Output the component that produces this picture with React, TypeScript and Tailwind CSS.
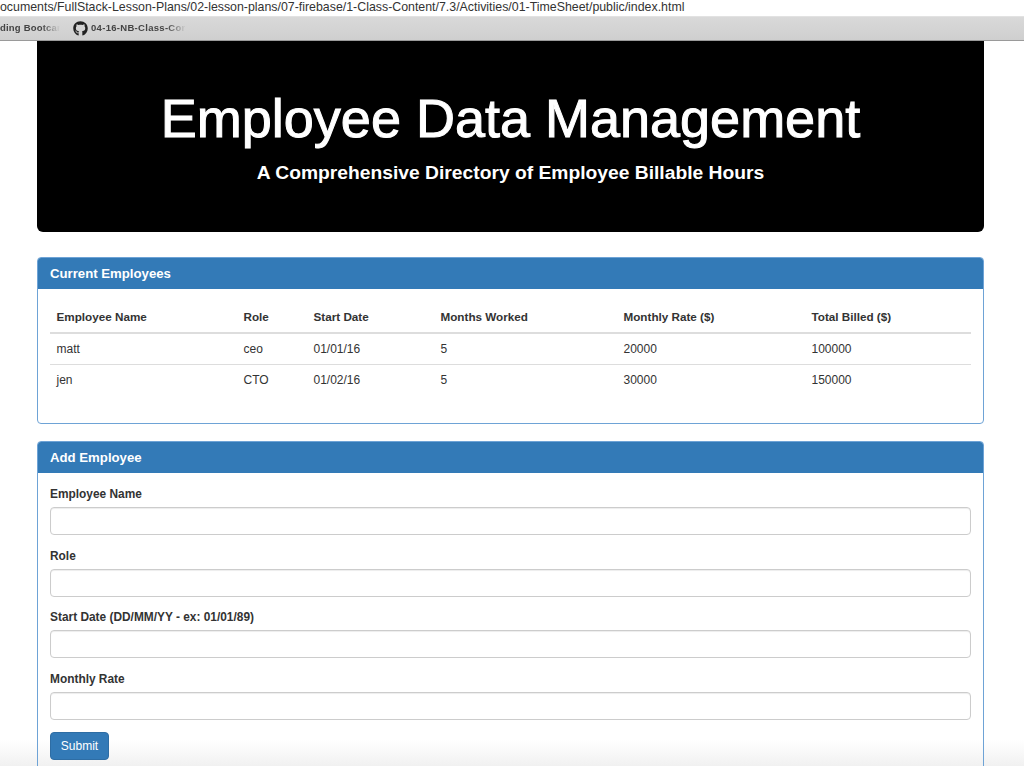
import React from "react";
import { FaGithub } from "react-icons/fa";

const cols = ["w-[187px]", "w-[70px]", "w-[127px]", "w-[183px]", "w-[188px]", "w-[159px]"];
const headers = ["Employee Name", "Role", "Start Date", "Months Worked", "Monthly Rate ($)", "Total Billed ($)"];
const rows = [
  ["matt", "ceo", "01/01/16", "5", "20000", "100000"],
  ["jen", "CTO", "01/02/16", "5", "30000", "150000"],
];
const fields = ["Employee Name", "Role", "Start Date (DD/MM/YY - ex: 01/01/89)", "Monthly Rate"];

function Row({ cells, className }: { cells: string[]; className: string }) {
  return (
    <div className={`flex ${className}`}>
      {cells.map((c, i) => (
        <div key={i} className={`${cols[i]} px-[6.5px]`}>{c}</div>
      ))}
    </div>
  );
}

function Panel({ title, children, className }: { title: string; children: React.ReactNode; className?: string }) {
  return (
    <section className={`rounded-[4px] border border-[#6ea3d6] ${className ?? ""}`}>
      <h2 className="flex h-[31px] items-center rounded-t-[3px] bg-[#337ab7] px-[12px] text-[13.2px] font-bold text-white">{title}</h2>
      {children}
    </section>
  );
}

export default function App() {
  return (
    <div className="relative h-[766px] w-[1024px] overflow-hidden bg-white text-[12px] text-[#333] [font-family:'Liberation_Sans',Arial,sans-serif]">
      <div className="pointer-events-none absolute inset-x-0 bottom-0 h-[26px] bg-[linear-gradient(rgba(235,235,235,0),rgba(235,235,235,0.7))]" />
      <header className="h-[16px] overflow-hidden whitespace-nowrap bg-white text-[12.36px] leading-[14px] text-[#333]">
        ocuments/FullStack-Lesson-Plans/02-lesson-plans/07-firebase/1-Class-Content/7.3/Activities/01-TimeSheet/public/index.html
      </header>
      <nav className="flex h-[25px] items-center border-y border-t-[#e2e2e2] border-b-[#9a9a9a] bg-[linear-gradient(#d9d9d9,#cfcfcf)] text-[9.5px] font-bold text-[#444]">
        <span className="w-[60px] whitespace-nowrap tracking-[0.2px] [mask-image:linear-gradient(90deg,#000_70%,transparent)]">ding Bootcam</span>
        <FaGithub className="ml-[13px] h-[15px] w-[15px] text-[#222]" />
        <span className="ml-[3px] whitespace-nowrap tracking-[0.3px] [mask-image:linear-gradient(90deg,#000_80%,transparent)]">04-16-NB-Class-Cor</span>
      </nav>
      <main className="relative mx-[37px] w-[947px]">
        <div className="flex h-[191px] flex-col items-center rounded-b-[6px] bg-black text-white">
          <h1 className="mt-[45px] text-[54px] font-normal leading-[64px] [-webkit-text-stroke:1px_white]">Employee Data Management</h1>
          <p className="mt-[10px] text-[19.25px] font-bold leading-[26px]">A Comprehensive Directory of Employee Billable Hours</p>
        </div>
        <Panel title="Current Employees" className="mt-[25px] h-[167px]">
          <div className="px-[12px] pt-[13px]">
            <Row cells={headers} className="h-[32px] items-center border-b-2 border-[#ddd] text-[11.7px] font-bold" />
            <Row cells={rows[0]} className="h-[31px] items-center border-b border-[#ddd]" />
            <Row cells={rows[1]} className="h-[30px] items-center" />
          </div>
        </Panel>
        <Panel title="Add Employee" className="mt-[17px] h-[340px]">
          <form className="px-[12px] pt-[13px]">
            {fields.map((f) => (
              <div key={f} className="mb-[12.5px]">
                <label className="mb-[5px] block text-[11.9px] font-bold leading-[16px]">{f}</label>
                <input className="block h-[28px] w-[921px] rounded-[4px] border border-[#ccc] bg-white shadow-[inset_0_1px_1px_rgba(0,0,0,0.075)]" />
              </div>
            ))}
            <button type="button" className="h-[28px] w-[59px] rounded-[4px] border border-[#2e6da4] bg-[#337ab7] text-[12px] text-white">Submit</button>
          </form>
        </Panel>
      </main>
    </div>
  );
}
